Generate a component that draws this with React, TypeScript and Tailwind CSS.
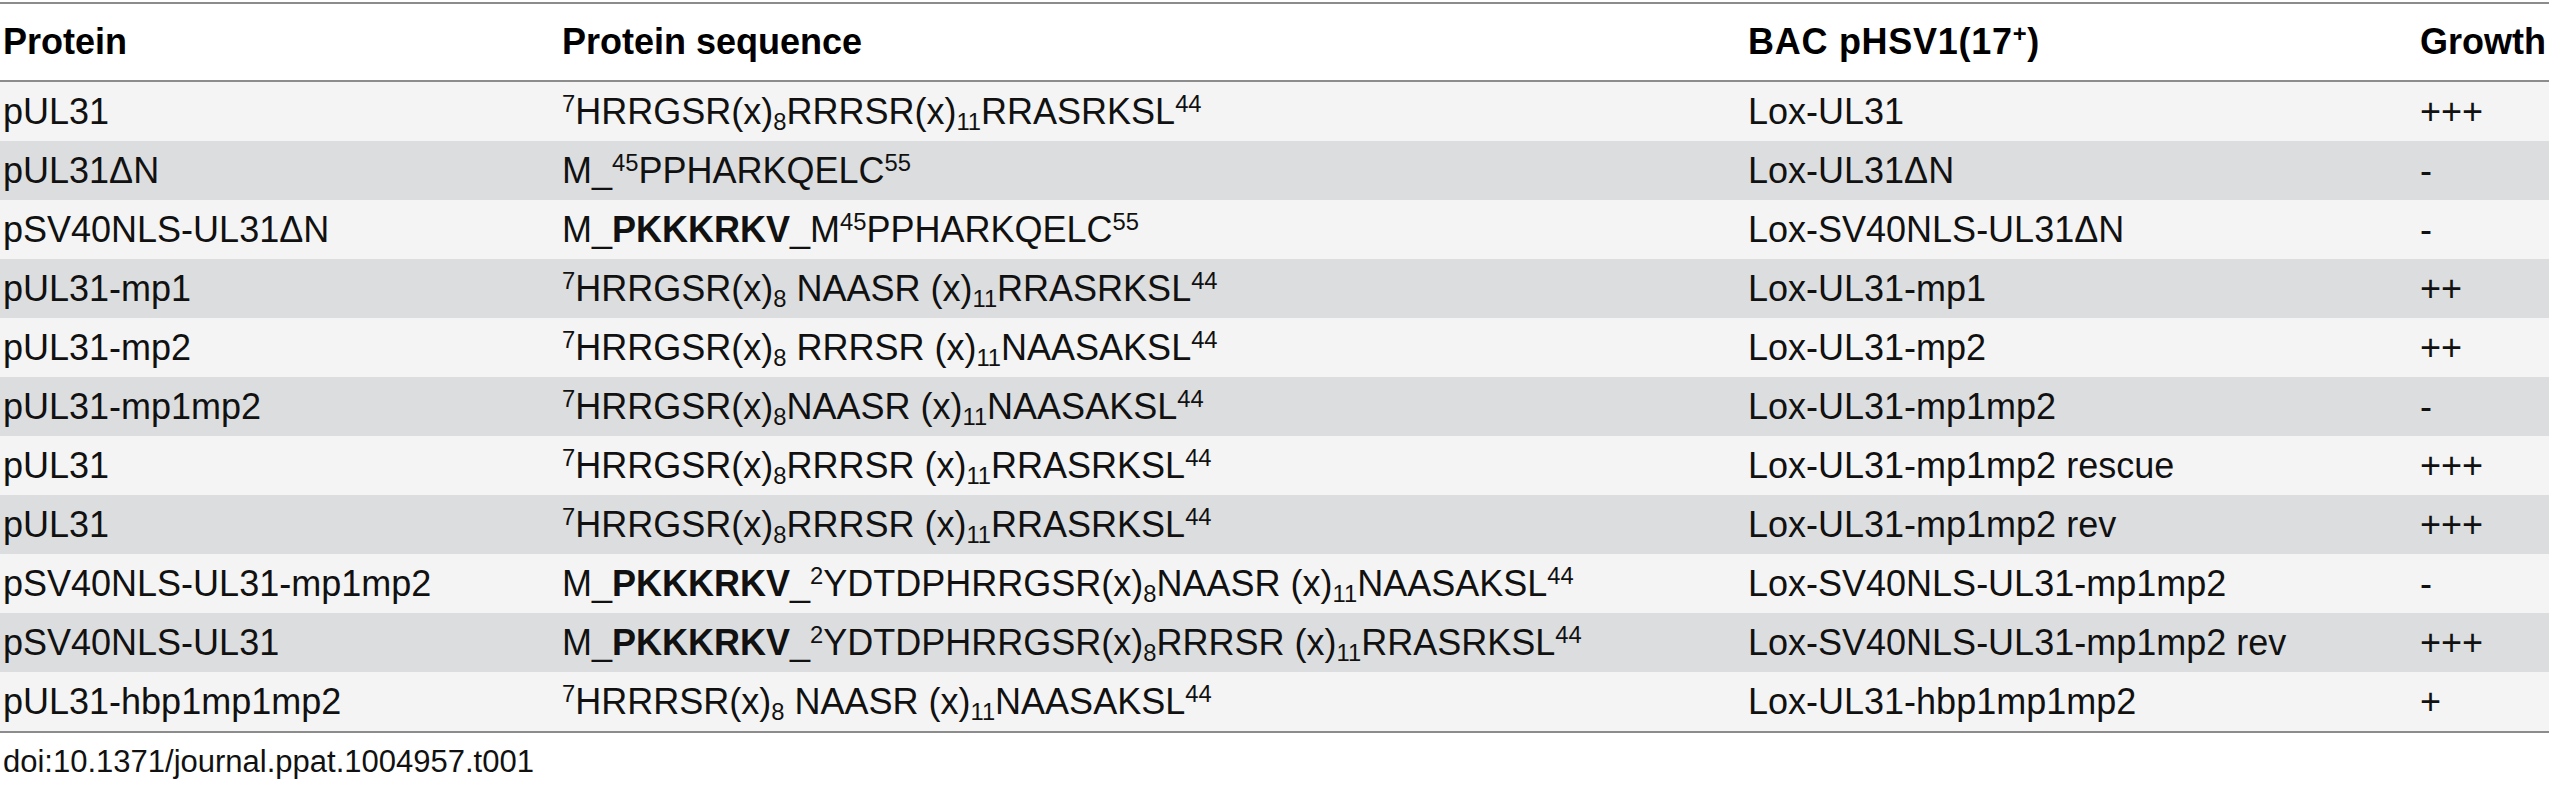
import React from "react";

type Row = {
  protein: string;
  sequence: React.ReactNode;
  bac: string;
  growth: string;
};

const Sup = ({ children }: { children: React.ReactNode }) => (
  <sup className="text-[0.66em] relative top-[-0.5em]">{children}</sup>
);

const Sub = ({ children }: { children: React.ReactNode }) => (
  <sub className="text-[0.66em] relative bottom-[-0.28em]">{children}</sub>
);

const Nls = () => <b className="font-bold">PKKKRKV</b>;

// common sequence pieces
const wildType = (
  <>
    <Sup>7</Sup>HRRGSR(x)<Sub>8</Sub>RRRSR (x)<Sub>11</Sub>RRASRKSL<Sup>44</Sup>
  </>
);

const rows: Row[] = [
  {
    protein: "pUL31",
    sequence: (
      <>
        <Sup>7</Sup>HRRGSR(x)<Sub>8</Sub>RRRSR(x)<Sub>11</Sub>RRASRKSL<Sup>44</Sup>
      </>
    ),
    bac: "Lox-UL31",
    growth: "+++",
  },
  {
    protein: "pUL31ΔN",
    sequence: (
      <>
        M_<Sup>45</Sup>PPHARKQELC<Sup>55</Sup>
      </>
    ),
    bac: "Lox-UL31ΔN",
    growth: "-",
  },
  {
    protein: "pSV40NLS-UL31ΔN",
    sequence: (
      <>
        M_<Nls />_M<Sup>45</Sup>PPHARKQELC<Sup>55</Sup>
      </>
    ),
    bac: "Lox-SV40NLS-UL31ΔN",
    growth: "-",
  },
  {
    protein: "pUL31-mp1",
    sequence: (
      <>
        <Sup>7</Sup>HRRGSR(x)<Sub>8</Sub> NAASR (x)<Sub>11</Sub>RRASRKSL<Sup>44</Sup>
      </>
    ),
    bac: "Lox-UL31-mp1",
    growth: "++",
  },
  {
    protein: "pUL31-mp2",
    sequence: (
      <>
        <Sup>7</Sup>HRRGSR(x)<Sub>8</Sub> RRRSR (x)<Sub>11</Sub>NAASAKSL<Sup>44</Sup>
      </>
    ),
    bac: "Lox-UL31-mp2",
    growth: "++",
  },
  {
    protein: "pUL31-mp1mp2",
    sequence: (
      <>
        <Sup>7</Sup>HRRGSR(x)<Sub>8</Sub>NAASR (x)<Sub>11</Sub>NAASAKSL<Sup>44</Sup>
      </>
    ),
    bac: "Lox-UL31-mp1mp2",
    growth: "-",
  },
  { protein: "pUL31", sequence: wildType, bac: "Lox-UL31-mp1mp2 rescue", growth: "+++" },
  { protein: "pUL31", sequence: wildType, bac: "Lox-UL31-mp1mp2 rev", growth: "+++" },
  {
    protein: "pSV40NLS-UL31-mp1mp2",
    sequence: (
      <>
        M_<Nls />_<Sup>2</Sup>YDTDPHRRGSR(x)<Sub>8</Sub>NAASR (x)<Sub>11</Sub>NAASAKSL<Sup>44</Sup>
      </>
    ),
    bac: "Lox-SV40NLS-UL31-mp1mp2",
    growth: "-",
  },
  {
    protein: "pSV40NLS-UL31",
    sequence: (
      <>
        M_<Nls />_<Sup>2</Sup>YDTDPHRRGSR(x)<Sub>8</Sub>RRRSR (x)<Sub>11</Sub>RRASRKSL<Sup>44</Sup>
      </>
    ),
    bac: "Lox-SV40NLS-UL31-mp1mp2 rev",
    growth: "+++",
  },
  {
    protein: "pUL31-hbp1mp1mp2",
    sequence: (
      <>
        <Sup>7</Sup>HRRRSR(x)<Sub>8</Sub> NAASR (x)<Sub>11</Sub>NAASAKSL<Sup>44</Sup>
      </>
    ),
    bac: "Lox-UL31-hbp1mp1mp2",
    growth: "+",
  },
];

const cols = "grid grid-cols-[559px_1186px_672px_132px]";

const App: React.FC = () => {
  return (
    <div className="w-[2553px] h-[800px] bg-white text-[#111] font-['Liberation_Sans',Arial,sans-serif]">
      <div className="w-[2549px] pt-[2px]">
        {/* HEADER */}
        <div className={`${cols} h-[80px] border-y-2 border-[#8c8c8c] items-center text-[36px] font-bold text-black leading-none`}>
          <div className="pl-[3px]">Protein</div>
          <div className="pl-[3px]">Protein sequence</div>
          <div className="pl-[3px] tracking-[0.02em]">
            BAC pHSV1(17<Sup>+</Sup>)
          </div>
          <div className="pl-[3px]">Growth</div>
        </div>

        {/* ROWS */}
        <div className="border-b-2 border-[#8c8c8c]">
          {rows.map((row, i) => (
            <div
              key={i}
              className={`${cols} h-[59px] items-center text-[36px] leading-none ${
                i % 2 === 0 ? "bg-[#f4f4f4]" : "bg-[#dcdddf]"
              }`}
            >
              <div className="pl-[3px] whitespace-nowrap">{row.protein}</div>
              <div className="pl-[3px] whitespace-pre">{row.sequence}</div>
              <div className="pl-[3px] whitespace-nowrap">{row.bac}</div>
              <div className="pl-[3px]">{row.growth}</div>
            </div>
          ))}
        </div>

        <div className="pl-[3px] pt-[13px] text-[31px] leading-none">
          doi:10.1371/journal.ppat.1004957.t001
        </div>
      </div>
    </div>
  );
};

export default App;
